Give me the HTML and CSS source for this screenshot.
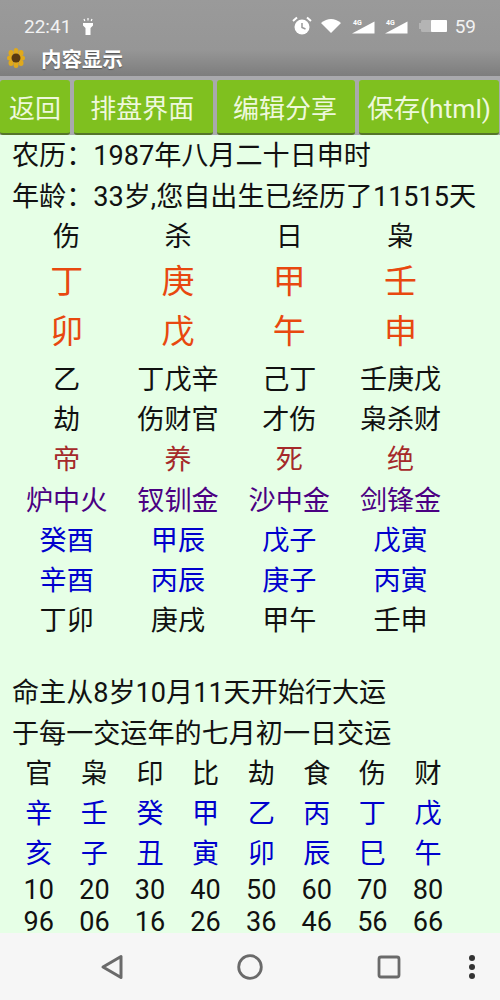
FILE: index.html
```html
<!DOCTYPE html>
<html lang="zh-CN">
<head>
  <meta charset="UTF-8">
  <meta name="viewport" content="width=device-width, initial-scale=1.0">
  <title>内容显示</title>
  <link rel="stylesheet" href="styles.css">
</head>
<body>
  <div class="screen">
    <header class="top">
      <div class="status">
        <span class="time">22:41</span>
        <svg class="torch" width="14" height="17" viewBox="0 0 14 17"><path d="M2 5h10v2.500l-2.500 2.500v7h-5v-7l-2.500-2.500z" fill="#fff"/><path d="M3 1l.8 2M7 0v2.500M11 1l-.8 2" stroke="#fff" stroke-width="1.200"/></svg>
        <span class="status-right">
          <svg width="20" height="20" viewBox="0 0 20 20"><circle cx="10" cy="11" r="7.500" fill="#fff"/><path d="M10 7v4.500l3.500 1.500" stroke="#999" stroke-width="1.500" fill="none"/><path d="M1 5l4-3.500M19 5l-4-3.500" stroke="#fff" stroke-width="2"/></svg>
          <svg class="wifi" width="20" height="14" viewBox="0 0 20 14"><path d="M0 4q10-8 20 0l-10 10z" fill="#fff"/></svg>
          <svg class="signal" width="23" height="16" viewBox="0 0 23 16"><path d="M0 15.500l22.500-12v12z" fill="#fff"/><text x="1" y="7" class="net">4G</text></svg>
          <svg class="signal" width="23" height="16" viewBox="0 0 23 16"><path d="M0 15.500l22.500-12v12z" fill="#fff"/><text x="1" y="7" class="net">4G</text></svg>
          <svg class="battery" width="28" height="14" viewBox="0 0 28 14"><rect x="2" y="1" width="26" height="12" rx="1.500" fill="#b4b4b4"/><rect x="0" y="4" width="2" height="6" fill="#b4b4b4"/><rect x="12" y="1" width="16" height="12" rx="1" fill="#fff"/></svg>
          <span class="level">59</span>
        </span>
      </div>
      <div class="title-bar">
        <svg class="logo" width="18" height="20" viewBox="0 0 18 20">
          <g fill="#e0a91c">
            <ellipse cx="9" cy="3.500" rx="2.500" ry="3.500"/>
            <ellipse cx="9" cy="16.500" rx="2.500" ry="3.500"/>
            <ellipse cx="3" cy="10" rx="3" ry="2.500"/>
            <ellipse cx="15" cy="10" rx="3" ry="2.500"/>
            <ellipse cx="4" cy="5" rx="2.500" ry="3"/>
            <ellipse cx="14" cy="5" rx="2.500" ry="3"/>
            <ellipse cx="4" cy="15" rx="2.500" ry="3"/>
            <ellipse cx="14" cy="15" rx="2.500" ry="3"/>
          </g>
          <circle cx="9" cy="10" r="4.500" fill="#5a3a10"/>
        </svg>
        <span class="title">内容显示</span>
      </div>
    </header>

    <nav class="toolbar">
      <button class="btn btn-back">返回</button>
      <button class="btn btn-wide">排盘界面</button>
      <button class="btn btn-wide">编辑分享</button>
      <button class="btn btn-save">保存(html)</button>
    </nav>

    <main class="content">
      <p class="line">农历：1987年八月二十日申时</p>
      <p class="line">年龄：33岁,您自出生已经历了11515天</p>

      <div class="pillars">
        <span>伤</span><span>杀</span><span>日</span><span>枭</span>
        <span class="big stem">丁</span><span class="big stem">庚</span><span class="big stem">甲</span><span class="big stem">壬</span>
        <span class="big branch">卯</span><span class="big branch">戊</span><span class="big branch">午</span><span class="big branch">申</span>
        <span>乙</span><span>丁戊辛</span><span>己丁</span><span>壬庚戊</span>
        <span>劫</span><span>伤财官</span><span>才伤</span><span>枭杀财</span>
        <span class="brown">帝</span><span class="brown">养</span><span class="brown">死</span><span class="brown">绝</span>
        <span class="purple">炉中火</span><span class="purple">钗钏金</span><span class="purple">沙中金</span><span class="purple">剑锋金</span>
        <span class="blue">癸酉</span><span class="blue">甲辰</span><span class="blue">戊子</span><span class="blue">戊寅</span>
        <span class="blue">辛酉</span><span class="blue">丙辰</span><span class="blue">庚子</span><span class="blue">丙寅</span>
        <span>丁卯</span><span>庚戌</span><span>甲午</span><span>壬申</span>
      </div>

      <p class="line gap">命主从8岁10月11天开始行大运</p>
      <p class="line">于每一交运年的七月初一日交运</p>

      <div class="luck">
        <span>官</span><span>枭</span><span>印</span><span>比</span><span>劫</span><span>食</span><span>伤</span><span>财</span>
        <span class="blue">辛</span><span class="blue">壬</span><span class="blue">癸</span><span class="blue">甲</span><span class="blue">乙</span><span class="blue">丙</span><span class="blue">丁</span><span class="blue">戊</span>
        <span class="blue">亥</span><span class="blue">子</span><span class="blue">丑</span><span class="blue">寅</span><span class="blue">卯</span><span class="blue">辰</span><span class="blue">巳</span><span class="blue">午</span>
        <span class="num">10</span><span class="num">20</span><span class="num">30</span><span class="num">40</span><span class="num">50</span><span class="num">60</span><span class="num">70</span><span class="num">80</span>
        <span class="year">96</span><span class="year">06</span><span class="year">16</span><span class="year">26</span><span class="year">36</span><span class="year">46</span><span class="year">56</span><span class="year">66</span>
      </div>
    </main>

    <footer class="navbar">
      <svg class="nav-back" width="24" height="26" viewBox="0 0 24 26"><path d="M21 2.500v21L3 13z" fill="none" stroke="#6a6a6a" stroke-width="3" stroke-linejoin="round"/></svg>
      <svg class="nav-home" width="26" height="26" viewBox="0 0 26 26"><circle cx="13" cy="13" r="11.300" fill="none" stroke="#6a6a6a" stroke-width="2.800"/></svg>
      <svg class="nav-recent" width="24" height="24" viewBox="0 0 24 24"><rect x="2" y="2" width="20" height="20" rx="2" fill="none" stroke="#6a6a6a" stroke-width="2.800"/></svg>
      <svg class="nav-more" width="8" height="26" viewBox="0 0 8 26"><circle cx="4" cy="4" r="3" fill="#333"/><circle cx="4" cy="13" r="3" fill="#333"/><circle cx="4" cy="22" r="3" fill="#333"/></svg>
    </footer>
  </div>
</body>
</html>
```

FILE: styles.css
```css
* {
  margin: 0;
  padding: 0;
  box-sizing: border-box;
}

html, body {
  width: 100%;
  height: 100%;
}

body {
  font-family: Roboto, "Noto Sans CJK SC", sans-serif;
  overflow: hidden;
}

.screen {
  display: flex;
  flex-direction: column;
  height: 1000px;
  background-color: #e6ffe6;
}

.top {
  height: 76px;
  color: #fff;
  background: linear-gradient(#9a9a9a 0, #969696 50px, #7d7d7d 76px);
}

.status {
  display: flex;
  align-items: center;
  height: 38px;
  padding: 14px 24px 0 24px;
  font-size: 19px;
  color: #f2f2f2;
}

.torch {
  margin-left: 10px;
}

.status-right {
  display: flex;
  align-items: center;
  margin-left: auto;
}

.wifi {
  margin-left: 9px;
}

.signal {
  margin-left: 11px;
}

.signal + .signal {
  margin-left: 10px;
}

.net {
  font-size: 7px;
  font-weight: bold;
  fill: #fff;
}

.battery {
  margin-left: 11px;
}

.level {
  margin-left: 8px;
  font-size: 19px;
}

.title-bar {
  display: flex;
  align-items: center;
  height: 38px;
  padding: 1px 0 0 7px;
}

.title {
  margin-left: 16px;
  font-size: 20.500px;
  font-weight: 700;
  text-shadow: 0 1px 1px #555;
}

.toolbar {
  display: flex;
  gap: 4px;
  height: 59px;
  padding: 4px 1px 0 0;
  background-color: #a9a9ad;
}

.btn {
  height: 55px;
  border: none;
  border-radius: 3px;
  border-bottom: 2px solid #55752a;
  color: #eef8dc;
  font-family: inherit;
  font-size: 26px;
  white-space: nowrap;
  background-color: #7fc01f;
}

.btn-back {
  width: 70px;
}

.btn-wide {
  width: 139px;
  padding-right: 2px;
}

.btn-save {
  width: 140px;
  font-size: 26.400px;
}

.content {
  flex: 1;
  padding: 1px 0 0 12px;
  color: #111;
  font-size: 27.100px;
}

.line {
  height: 41px;
  line-height: 41px;
  white-space: nowrap;
}

.pillars {
  display: grid;
  grid-template-columns: repeat(4, 111.300px);
  grid-template-rows: 38px 52px 52px;
  grid-auto-rows: 40.200px;
  margin-left: -1px;
  text-align: center;
  line-height: 40px;
}

.pillars span:nth-child(-n+4) {
  line-height: 38px;
}

.pillars .big {
  color: #e8480f;
  font-size: 33px;
}

.pillars .stem {
  line-height: 52px;
}

.pillars .branch {
  line-height: 48px;
}

.brown {
  color: #a52a2a;
}

.purple {
  color: #4b0082;
}

.blue {
  color: #0000cd;
}

.gap {
  margin-top: 32px;
}

.luck {
  display: grid;
  grid-template-columns: repeat(8, 55.600px);
  grid-template-rows: 40px 40px 40px 32px 27px;
  margin: -1px 0 0 -1px;
  text-align: center;
  line-height: 40px;
}

.luck .num {
  line-height: 32px;
}

.luck .year {
  padding-top: 5px;
  line-height: 22px;
}

.navbar {
  display: flex;
  align-items: center;
  height: 67px;
  background-color: #f6f6f6;
}

.nav-back {
  margin-left: 100px;
}

.nav-home {
  margin-left: 113px;
}

.nav-recent {
  margin-left: 114px;
}

.nav-more {
  margin-left: 67px;
}
```
